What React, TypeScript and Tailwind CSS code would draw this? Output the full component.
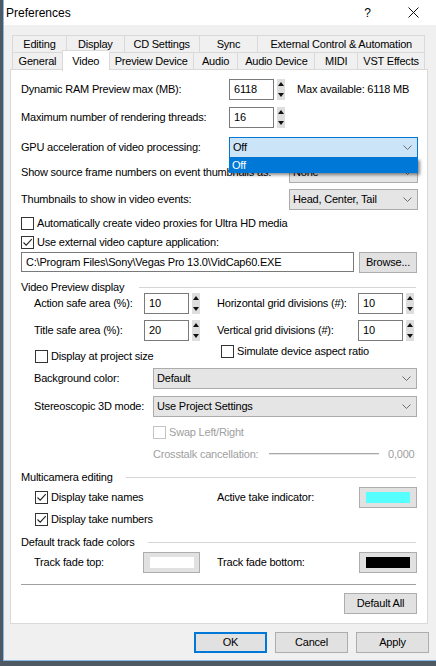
import React from 'react';

// Small UI pieces of the classic Windows preferences dialog

function Chevron({ color = '#6d6d6d' }: { color?: string }) {
  return (
    <svg width="9" height="5" viewBox="0 0 9 5" className="shrink-0">
      <path d="M0.5 0.5 L4.5 4.5 L8.5 0.5" fill="none" stroke={color} strokeWidth="1" />
    </svg>
  );
}

function Combo({ w, text, focused }: { w: string; text: string; focused?: boolean }) {
  return (
    <div
      className={`${w} flex h-[21px] shrink-0 items-center justify-between border pl-[3px] pr-[5px] ${
        focused ? 'border-[#0078d7] bg-[#cce4f7]' : 'border-[#acacac] bg-[#e5e5e5]'
      }`}
    >
      <span className="whitespace-nowrap">{text}</span>
      <Chevron />
    </div>
  );
}

function Spinner() {
  return (
    <div className="ml-[3px] flex h-[21px] w-[8px] shrink-0 flex-col items-center justify-between bg-[#dedede] py-[3px]">
      <svg width="6" height="4" viewBox="0 0 6 4">
        <path d="M3 0 L6 4 L0 4 Z" fill="#111" />
      </svg>
      <svg width="6" height="4" viewBox="0 0 6 4">
        <path d="M0 0 L6 0 L3 4 Z" fill="#111" />
      </svg>
    </div>
  );
}

function NumberBox({ value }: { value: string }) {
  return (
    <div className="flex shrink-0 items-center">
      <div className="flex h-[21px] w-[45px] items-center border border-[#7a7a7a] bg-white pl-[4px]">{value}</div>
      <Spinner />
    </div>
  );
}

function CheckBox({ checked, disabled }: { checked?: boolean; disabled?: boolean }) {
  return (
    <div
      className={`flex h-[13px] w-[13px] shrink-0 items-center justify-center border bg-white ${
        disabled ? 'border-[#c4c4c4]' : 'border-[#333333]'
      }`}
    >
      {checked && (
        <svg width="11" height="11" viewBox="0 0 11 11">
          <path d="M1.5 5.5 L4.2 8.2 L9.8 2.2" fill="none" stroke="#222" strokeWidth="1.1" />
        </svg>
      )}
    </div>
  );
}

function Check({ label, checked, disabled }: { label: string; checked?: boolean; disabled?: boolean }) {
  return (
    <div className={`flex h-[13px] items-center ${disabled ? 'text-[#a0a0a0]' : ''}`}>
      <CheckBox checked={checked} disabled={disabled} />
      <span className="ml-[3px] whitespace-nowrap">{label}</span>
    </div>
  );
}

function Button({ w, label, focused }: { w: string; label: string; focused?: boolean }) {
  return (
    <div
      className={`${w} flex h-[21px] shrink-0 items-center justify-center bg-[#e1e1e1] ${
        focused ? 'border-2 border-[#0078d7]' : 'border border-[#adadad]'
      }`}
    >
      {label}
    </div>
  );
}

function ColorButton({ w, color }: { w: string; color: string }) {
  return (
    <div className={`${w} flex h-[21px] shrink-0 items-center justify-center border border-[#adadad] bg-[#e1e1e1]`}>
      <div className={`h-[11px] w-[44px] ${color}`} />
    </div>
  );
}

function GroupTitle({ label, w, className }: { label: string; w: string; className: string }) {
  return (
    <div className={`flex h-[12px] items-center pr-[11px] ${className}`}>
      <span className={`${w} shrink-0 whitespace-nowrap`}>{label}</span>
      <div className="h-px flex-1 bg-[#d5d5d5]" />
    </div>
  );
}

const topTabs = [
  { label: 'Editing', w: 'w-[54px]' },
  { label: 'Display', w: 'w-[58px]' },
  { label: 'CD Settings', w: 'w-[75px]' },
  { label: 'Sync', w: 'w-[59px]' },
  { label: 'External Control & Automation', w: 'w-[167px]' },
];

const bottomTabs = [
  { label: 'General', w: 'w-[50px]' },
  { label: 'Video', w: 'w-[47px]', active: true },
  { label: 'Preview Device', w: 'w-[84px]' },
  { label: 'Audio', w: 'w-[45px]' },
  { label: 'Audio Device', w: 'w-[77px]' },
  { label: 'MIDI', w: 'w-[43px]' },
  { label: 'VST Effects', w: 'w-[67px]' },
];

export default function App() {
  return (
    <div className="flex h-[666px] w-[436px] overflow-hidden bg-[#4f5963] font-['Liberation_Sans',Arial,sans-serif] text-[11px] tracking-[-0.2px] text-black">
      <div className="w-[3px] shrink-0" />
      <div className="flex h-[661px] w-[433px] shrink-0 flex-col border-b border-l border-[#8ab8e6] bg-[#f0f0f0]">
        {/* Title bar */}
        <div className="flex h-[25px] shrink-0 items-center bg-white pl-[2px] text-[12px] tracking-normal">
          <span>Preferences</span>
          <span className="ml-auto">?</span>
          <svg width="11" height="11" viewBox="0 0 11 11" className="ml-[37px] mr-[17px]">
            <path d="M0.5 0.5 L10.5 10.5 M10.5 0.5 L0.5 10.5" stroke="#111" strokeWidth="1" />
          </svg>
        </div>

        {/* Tabs */}
        <div className="ml-[8px] mt-[10px] w-[413px]">
          <div className="flex h-[17px] border-r border-t border-[#d9d9d9]">
            {topTabs.map((t) => (
              <div key={t.label} className={`${t.w} flex items-center justify-center whitespace-nowrap border-l border-[#d9d9d9]`}>
                {t.label}
              </div>
            ))}
          </div>
          <div className="flex h-[17px] border-r border-t border-[#d9d9d9]">
            {bottomTabs.map((t) =>
              t.active ? (
                <div
                  key={t.label}
                  className={`${t.w} relative z-10 -mt-[3px] flex h-[21px] items-start justify-center border-l border-t border-[#d9d9d9] bg-white pt-[2px]`}
                >
                  {t.label}
                </div>
              ) : (
                <div key={t.label} className={`${t.w} flex items-center justify-center whitespace-nowrap border-l border-[#d9d9d9]`}>
                  {t.label}
                </div>
              )
            )}
          </div>
        </div>

        {/* Video page */}
        <div className="ml-[6px] flex h-[555px] w-[418px] flex-col border border-[#d9d9d9] bg-white pl-[10px]">
          <div className="mt-[9px] flex h-[21px] items-center">
            <span className="w-[208px] shrink-0">Dynamic RAM Preview max (MB):</span>
            <NumberBox value="6118" />
            <span className="ml-[12px] whitespace-nowrap">Max available: 6118 MB</span>
          </div>
          <div className="mt-[7px] flex h-[21px] items-center">
            <span className="w-[208px] shrink-0">Maximum number of rendering threads:</span>
            <NumberBox value="16" />
          </div>
          <div className="relative z-20 mt-[9px] flex h-[21px] items-center">
            <span className="w-[208px] shrink-0">GPU acceleration of video processing:</span>
            <div className="relative">
              <Combo w="w-[189px]" text="Off" focused />
              <div className="absolute left-0 top-[21px] flex h-[15px] w-[189px] items-center bg-[#0078d7] pl-[3px] text-white shadow-[2px_2px_3px_rgba(0,0,0,0.45)]">
                Off
              </div>
            </div>
          </div>
          <div className="mt-[4px] flex h-[21px] items-center">
            <span className="w-[268px] shrink-0 whitespace-nowrap">Show source frame numbers on event thumbnails as:</span>
            <Combo w="w-[129px]" text="None" />
          </div>
          <div className="mt-[6px] flex h-[21px] items-center">
            <span className="w-[268px] shrink-0">Thumbnails to show in video events:</span>
            <Combo w="w-[129px]" text="Head, Center, Tail" />
          </div>
          <div className="mt-[7px]">
            <Check label="Automatically create video proxies for Ultra HD media" />
          </div>
          <div className="mt-[6px]">
            <Check label="Use external video capture application:" checked />
          </div>
          <div className="mt-[3px] flex h-[20px] items-center">
            <div className="flex h-[20px] w-[333px] items-center border border-[#7a7a7a] bg-white pl-[4px]">
              C:\Program Files\Sony\Vegas Pro 13.0\VidCap60.EXE
            </div>
            <Button w="ml-[5px] w-[58px]" label="Browse..." />
          </div>

          <GroupTitle label="Video Preview display" w="w-[118px]" className="mt-[9px]" />
          <div className="flex h-[21px] items-center pl-[13px]">
            <span className="w-[110px] shrink-0">Action safe area (%):</span>
            <NumberBox value="10" />
            <span className="ml-[17px] w-[141px] shrink-0">Horizontal grid divisions (#):</span>
            <NumberBox value="10" />
          </div>
          <div className="mt-[6px] flex h-[21px] items-center pl-[13px]">
            <span className="w-[110px] shrink-0">Title safe area (%):</span>
            <NumberBox value="20" />
            <span className="ml-[17px] w-[141px] shrink-0">Vertical grid divisions (#):</span>
            <NumberBox value="10" />
          </div>
          <div className="flex h-[21px] items-start pl-[14px]">
            <div className="mt-[9px] w-[186px] shrink-0">
              <Check label="Display at project size" />
            </div>
            <div className="mt-[4px]">
              <Check label="Simulate device aspect ratio" />
            </div>
          </div>
          <div className="mt-[6px] flex h-[21px] items-center pl-[13px]">
            <span className="w-[119px] shrink-0">Background color:</span>
            <Combo w="w-[264px]" text="Default" />
          </div>
          <div className="mt-[7px] flex h-[21px] items-center pl-[13px]">
            <span className="w-[119px] shrink-0">Stereoscopic 3D mode:</span>
            <Combo w="w-[264px]" text="Use Project Settings" />
          </div>
          <div className="mt-[9px] pl-[132px]">
            <Check label="Swap Left/Right" disabled />
          </div>
          <div className="mt-[8px] flex h-[14px] items-center pl-[132px] text-[#a0a0a0]">
            <span className="w-[116px] shrink-0 whitespace-nowrap">Crosstalk cancellation:</span>
            <div className="h-[2px] w-[110px] shrink-0 border-t border-[#a8a8a8] bg-[#e4e4e4]" />
            <span className="ml-[9px]">0,000</span>
          </div>

          <GroupTitle label="Multicamera editing" w="w-[105px]" className="mt-[10px]" />
          <div className="mt-[4px] flex h-[21px] items-center pl-[14px]">
            <div className="w-[182px] shrink-0">
              <Check label="Display take names" checked />
            </div>
            <span className="w-[142px] shrink-0">Active take indicator:</span>
            <ColorButton w="w-[58px]" color="bg-[#55ffff]" />
          </div>
          <div className="mt-[5px] pl-[14px]">
            <Check label="Display take numbers" checked />
          </div>

          <GroupTitle label="Default track fade colors" w="w-[127px]" className="mt-[10px]" />
          <div className="mt-[4px] flex h-[21px] items-center pl-[13px]">
            <span className="w-[109px] shrink-0">Track fade top:</span>
            <ColorButton w="w-[57px]" color="bg-white" />
            <span className="ml-[17px] w-[142px] shrink-0">Track fade bottom:</span>
            <ColorButton w="w-[58px]" color="bg-black" />
          </div>
          <div className="mt-[11px] h-px w-[395px] bg-[#a0a0a0]" />
          <div className="mt-[8px] flex">
            <Button w="ml-[323px] w-[73px]" label="Default All" />
          </div>
        </div>

        {/* Dialog buttons */}
        <div className="mt-[8px] flex items-center pl-[190px]">
          <Button w="w-[73px]" label="OK" focused />
          <Button w="ml-[8px] w-[73px]" label="Cancel" />
          <Button w="ml-[8px] w-[73px]" label="Apply" />
        </div>
      </div>
    </div>
  );
}
